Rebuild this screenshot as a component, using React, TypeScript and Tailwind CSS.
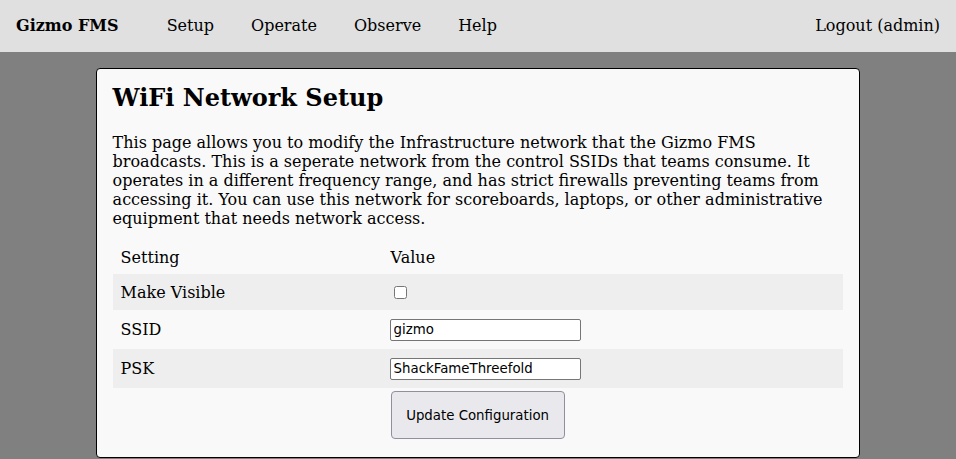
import React from 'react'

const navLinks = ['Setup', 'Operate', 'Observe', 'Help']

function NavBar() {
    return (
        <div className="h-[52px] bg-[#e0e0e0] flex items-center px-4 pb-[2px] text-[16px] leading-[normal]">
            <span className="font-bold">Gizmo FMS</span>
            <div className="flex items-center gap-[37px] ml-[48px]">
                {navLinks.map((l) => (
                    <a key={l} className="text-black">{l}</a>
                ))}
            </div>
            <a className="ml-auto text-black">Logout (admin)</a>
        </div>
    )
}

function TextField({ value }: { value: string }) {
    return (
        <input
            type="text"
            defaultValue={value}
            className="w-[191px] h-[22px] border border-[#767676] rounded-[2px] bg-white px-[3px] text-[13.33px] font-['DejaVu_Sans',sans-serif] text-black align-middle"
        />
    )
}

export default function App() {
    return (
        <div className="min-h-screen bg-[#808080] font-['DejaVu_Serif',serif] text-black leading-[normal]">
            <NavBar />
            <div className="w-4/5 mx-auto mt-4 bg-[#f9f9f9] border border-black rounded-[4px] px-4 pt-[14px] pb-[18px]">
                <h2 className="text-[24px] font-bold leading-[normal]">WiFi Network Setup</h2>
                <p className="mt-[21px] text-[16px]">
                    This page allows you to modify the Infrastructure network that the Gizmo FMS
                    broadcasts. This is a seperate network from the control SSIDs that teams consume. It
                    operates in a different frequency range, and has strict firewalls preventing teams from
                    accessing it. You can use this network for scoreboards, laptops, or other administrative
                    equipment that needs network access.
                </p>
                <table className="w-full mt-[12px] border-collapse text-[16px] text-left">
                    <thead>
                        <tr className="h-[34px]">
                            <th className="font-normal px-2 w-[269px]">Setting</th>
                            <th className="font-normal pl-[9px] pr-2">Value</th>
                        </tr>
                    </thead>
                    <tbody>
                        <tr className="h-[36px] bg-[#eeeeee]">
                            <td className="px-2">Make Visible</td>
                            <td className="px-2 align-middle">
                                <input type="checkbox" className="ml-1 mt-[3px] w-[13px] h-[13px] align-top" />
                            </td>
                        </tr>
                        <tr className="h-[39px]">
                            <td className="px-2">SSID</td>
                            <td className="px-2">
                                <TextField value="gizmo" />
                            </td>
                        </tr>
                        <tr className="h-[39px] bg-[#eeeeee]">
                            <td className="px-2">PSK</td>
                            <td className="px-2">
                                <TextField value="ShackFameThreefold" />
                            </td>
                        </tr>
                        <tr>
                            <td></td>
                            <td className="px-2 pt-[3px]">
                                <button className="ml-px w-[174px] h-[48px] bg-[#e9e9ed] border border-[#8f8f9d] rounded-[4px] text-[13.33px] font-['DejaVu_Sans',sans-serif] text-black">
                                    Update Configuration
                                </button>
                            </td>
                        </tr>
                    </tbody>
                </table>
            </div>
        </div>
    )
}
